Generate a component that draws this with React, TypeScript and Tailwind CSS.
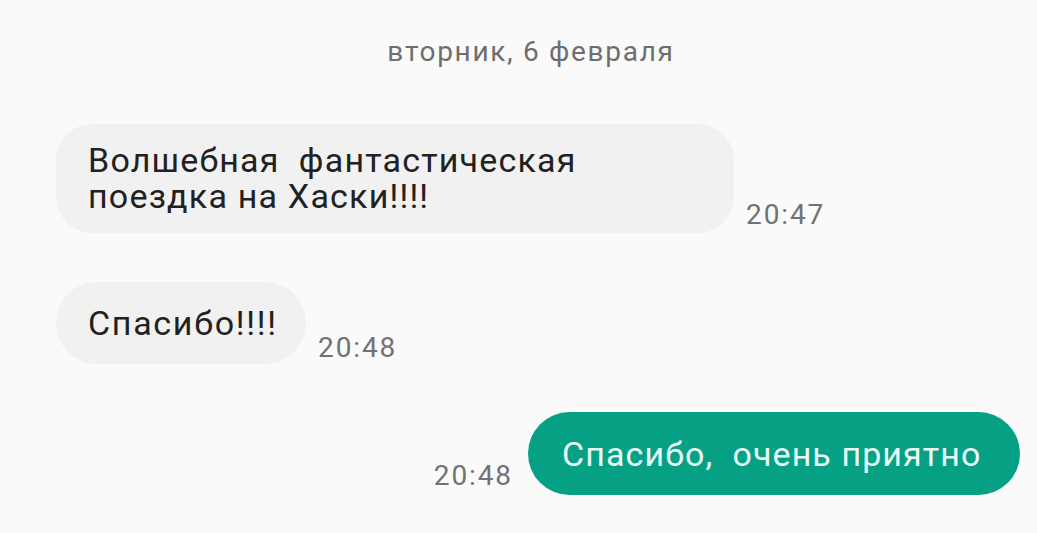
import React from "react";

const font = { fontFamily: "Roboto, 'Noto Sans', Arial, sans-serif" };

function Time({ children, className = "" }: { children: React.ReactNode; className?: string }) {
    return (
        <span className={`text-[28px] leading-[34px] tracking-[1.9px] text-[#727272] ${className}`}>
            {children}
        </span>
    );
}

export default function App() {
    return (
        <div
            className="w-full h-[533px] bg-[#fafafa] flex flex-col pl-[56px] pr-[17px] overflow-hidden"
            style={font}
        >
            <div className="pt-[35px] text-center pr-[14px] text-[28px] leading-[34px] tracking-[1.7px] text-[#6e6e6e]">
                вторник, 6 февраля
            </div>

            <div className="flex items-end gap-[12px] mt-[55px]">
                <div className="w-[678px] h-[109px] rounded-[36px] bg-[#f1f1f1] px-[32px] pt-[18px]">
                    <p className="w-[560px] whitespace-pre-wrap text-[34px] leading-[36px] tracking-[1.2px] text-[#212121]">
                        {"Волшебная  фантастическая поездка на Хаски!!!!"}
                    </p>
                </div>
                <Time className="mb-[1px]">20:47</Time>
            </div>

            <div className="flex items-end gap-[12px] mt-[49px]">
                <div className="w-[250px] h-[82px] rounded-[41px] bg-[#f1f1f1] pl-[32px] flex items-center">
                    <p className="whitespace-pre text-[34px] leading-[36px] tracking-[1.7px] text-[#212121]">
                        Спасибо!!!!
                    </p>
                </div>
                <Time className="mb-[-1px]">20:48</Time>
            </div>

            <div className="flex items-end justify-end gap-[15px] mt-[48px]">
                <Time className="mb-[2px]">20:48</Time>
                <div className="w-[492px] h-[83px] rounded-[42px] bg-[#06a184] pl-[34px] flex items-center">
                    <p className="whitespace-pre text-[34px] leading-[36px] tracking-[1.1px] text-[#e9fbf5]">
                        {"Спасибо,  очень приятно"}
                    </p>
                </div>
            </div>
        </div>
    );
}
